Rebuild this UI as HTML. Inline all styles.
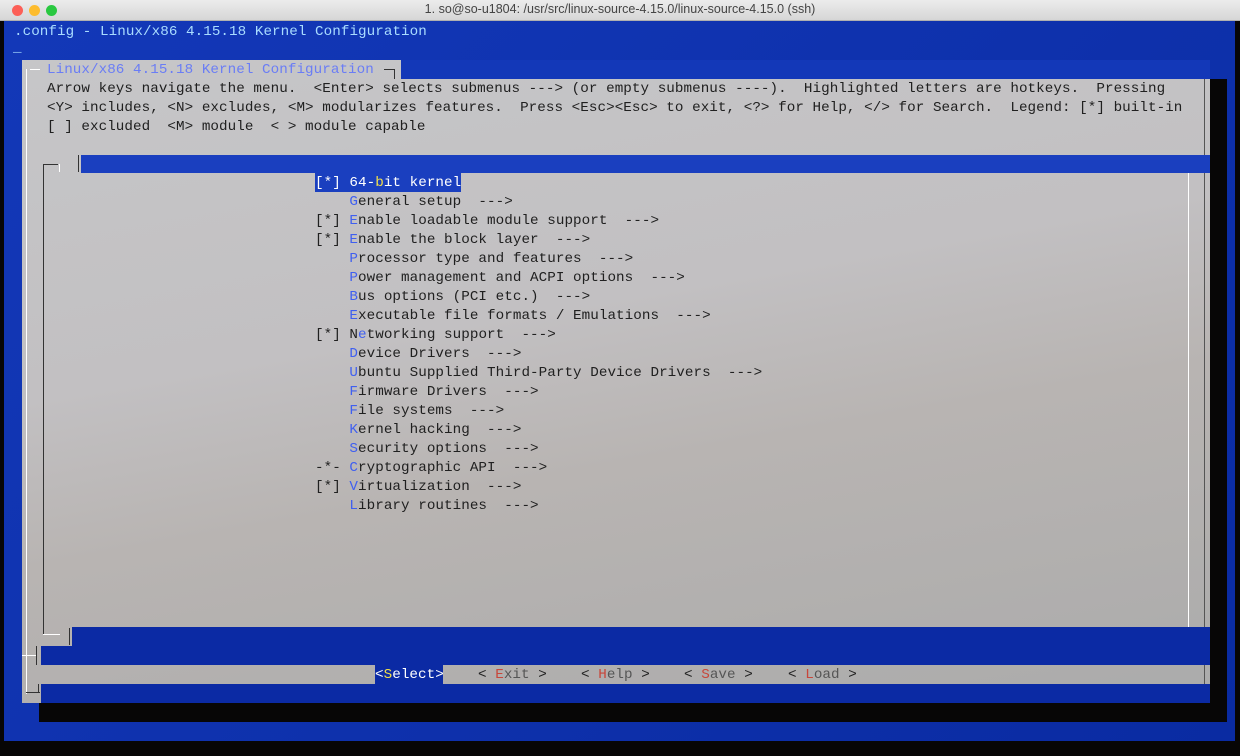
<!DOCTYPE html>
<html><head><meta charset="utf-8"><style>
*{margin:0;padding:0}
body{width:1240px;height:756px;overflow:hidden;background:#070606;position:relative;font-family:"Liberation Mono",monospace;font-size:14.25px}
div{position:absolute}
.t{white-space:pre;line-height:19px;height:19px;letter-spacing:0.05px;padding-top:1px}
.k{color:#3f5ff0}
.r{color:#c8463a}
.d{color:#202020}
</style></head><body>
<div style="left:0;top:0;width:1240px;height:20px;background:linear-gradient(#ececec,#d6d6d6);border-bottom:1px solid #b0b0b0"></div>
<div style="left:12px;top:5px;width:11px;height:11px;border-radius:50%;background:#fc5f57"></div>
<div style="left:29px;top:5px;width:11px;height:11px;border-radius:50%;background:#fdbc2e"></div>
<div style="left:46px;top:5px;width:11px;height:11px;border-radius:50%;background:#29c840"></div>
<div style="left:0;top:2px;width:1240px;text-align:center;font-family:'Liberation Sans',sans-serif;font-size:12.5px;color:#444;white-space:pre">1. so@so-u1804: /usr/src/linux-source-4.15.0/linux-source-4.15.0 (ssh)</div>
<div style="left:4px;top:21px;width:1231px;height:720px;background:linear-gradient(135deg,#1338b8,#0a2ba2)"></div>
<div class="t" style="left:14px;top:22px;color:#a9dcff">.config - Linux/x86 4.15.18 Kernel Configuration</div>
<div class="t" style="left:13px;top:38px;color:#a9dcff">_</div>
<!-- shadows -->
<div style="left:1210px;top:79px;width:17px;height:643px;background:#070606"></div>
<div style="left:39px;top:703px;width:1188px;height:19px;background:#070606"></div>
<!-- dialog -->
<div style="left:22px;top:60px;width:1188px;height:643px;background:linear-gradient(170deg,#c6c6c8 0%,#c2c0c2 40%,#b8b4b2 60%,#ababab 100%)"></div>
<div style="left:1204px;top:79px;width:1px;height:624px;background:#555"></div>
<div style="left:401px;top:60px;width:809px;height:19px;background:#1338b8"></div>
<div style="left:30px;top:69px;width:10px;height:1px;background:#fff"></div>
<div style="left:384px;top:69px;width:10px;height:1px;background:#333"></div>
<div style="left:394px;top:69px;width:1px;height:10px;background:#333"></div>
<div style="left:26px;top:69px;width:1px;height:625px;background:#fff"></div>
<div class="t" style="left:47px;top:60px;color:#6a7df5">Linux/x86 4.15.18 Kernel Configuration</div>
<div class="t d" style="left:47px;top:79px">Arrow keys navigate the menu.  &lt;Enter&gt; selects submenus ---&gt; (or empty submenus ----).  Highlighted letters are hotkeys.  Pressing</div>
<div class="t d" style="left:47px;top:98px">&lt;Y&gt; includes, &lt;N&gt; excludes, &lt;M&gt; modularizes features.  Press &lt;Esc&gt;&lt;Esc&gt; to exit, &lt;?&gt; for Help, &lt;/&gt; for Search.  Legend: [*] built-in</div>
<div class="t d" style="left:47px;top:117px">[ ] excluded  &lt;M&gt; module  &lt; &gt; module capable</div>
<!-- menu box -->
<div style="left:81px;top:155px;width:1129px;height:18px;background:#1a3fbf"></div>
<div style="left:78px;top:155px;width:1px;height:17px;background:#333"></div>
<div style="left:43px;top:164px;width:1px;height:470px;background:#333"></div>
<div style="left:43px;top:164px;width:15px;height:1px;background:#333"></div>
<div style="left:59px;top:164px;width:1px;height:8px;background:#fff"></div>
<div style="left:1188px;top:173px;width:1px;height:454px;background:#fff"></div>
<div style="left:43px;top:634px;width:17px;height:1px;background:#fff"></div>
<div style="left:72px;top:627px;width:1138px;height:19px;background:#0b2aa4"></div>
<div style="left:69px;top:628px;width:1px;height:17px;background:#333"></div>
<div style="left:41px;top:646px;width:1169px;height:19px;background:#0b2aa4"></div>
<div style="left:41px;top:684px;width:1169px;height:19px;background:#0b2aa4"></div>
<div style="left:22px;top:655px;width:14px;height:1px;background:#fff"></div>
<div style="left:36px;top:646px;width:1px;height:19px;background:#333"></div>
<div style="left:26px;top:692px;width:14px;height:1px;background:#333"></div>
<div style="left:38px;top:684px;width:1px;height:9px;background:#333"></div>
<!-- items -->
<div style="left:315px;top:173px;width:146px;height:19px;background:#1a3fbf"></div>
<div class="t" style="left:315px;top:173px;color:#fff">[*] 64-<span style="color:#f3e04a">b</span>it kernel</div>
<div class="t d" style="left:315px;top:192px">    <span class="k">G</span>eneral setup  ---&gt;</div>
<div class="t d" style="left:315px;top:211px">[*] <span class="k">E</span>nable loadable module support  ---&gt;</div>
<div class="t d" style="left:315px;top:230px">[*] <span class="k">E</span>nable the block layer  ---&gt;</div>
<div class="t d" style="left:315px;top:249px">    <span class="k">P</span>rocessor type and features  ---&gt;</div>
<div class="t d" style="left:315px;top:268px">    <span class="k">P</span>ower management and ACPI options  ---&gt;</div>
<div class="t d" style="left:315px;top:287px">    <span class="k">B</span>us options (PCI etc.)  ---&gt;</div>
<div class="t d" style="left:315px;top:306px">    <span class="k">E</span>xecutable file formats / Emulations  ---&gt;</div>
<div class="t d" style="left:315px;top:325px">[*] N<span class="k">e</span>tworking support  ---&gt;</div>
<div class="t d" style="left:315px;top:344px">    <span class="k">D</span>evice Drivers  ---&gt;</div>
<div class="t d" style="left:315px;top:363px">    <span class="k">U</span>buntu Supplied Third-Party Device Drivers  ---&gt;</div>
<div class="t d" style="left:315px;top:382px">    <span class="k">F</span>irmware Drivers  ---&gt;</div>
<div class="t d" style="left:315px;top:401px">    <span class="k">F</span>ile systems  ---&gt;</div>
<div class="t d" style="left:315px;top:420px">    <span class="k">K</span>ernel hacking  ---&gt;</div>
<div class="t d" style="left:315px;top:439px">    <span class="k">S</span>ecurity options  ---&gt;</div>
<div class="t d" style="left:315px;top:458px">-*- <span class="k">C</span>ryptographic API  ---&gt;</div>
<div class="t d" style="left:315px;top:477px">[*] <span class="k">V</span>irtualization  ---&gt;</div>
<div class="t d" style="left:315px;top:496px">    <span class="k">L</span>ibrary routines  ---&gt;</div>
<!-- buttons -->
<div style="left:375px;top:665px;width:68px;height:19px;background:#0b2aa4"></div>
<div class="t" style="left:375px;top:665px;color:#fff">&lt;<span style="color:#f3e04a">S</span>elect&gt;</div>
<div class="t d" style="left:478px;top:665px">&lt; <span class="r">E</span><span style="color:#555">xit</span> &gt;</div>
<div class="t d" style="left:581px;top:665px">&lt; <span class="r">H</span><span style="color:#555">elp</span> &gt;</div>
<div class="t d" style="left:684px;top:665px">&lt; <span class="r">S</span><span style="color:#555">ave</span> &gt;</div>
<div class="t d" style="left:788px;top:665px">&lt; <span class="r">L</span><span style="color:#555">oad</span> &gt;</div>
</body></html>
